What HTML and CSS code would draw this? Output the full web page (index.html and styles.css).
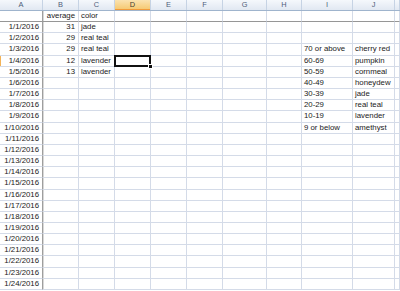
FILE: index.html
```html
<!DOCTYPE html>
<html>
<head>
<meta charset="utf-8">
<link rel="stylesheet" href="styles.css">
</head>
<body>
<div class="sheet">
  <div class="hdr"><span>A</span><span>B</span><span>C</span><span class="sel">D</span><span>E</span><span>F</span><span>G</span><span>H</span><span>I</span><span>J</span><span></span></div>
  <div class="r r1"><span></span><span class="n">average</span><span>color</span><span></span><span></span><span></span><span></span><span></span><span></span><span></span><span></span></div>
  <div class="r"><span class="n">1/1/2016</span><span class="n">31</span><span>jade</span><span></span><span></span><span></span><span></span><span></span><span></span><span></span><span></span></div>
  <div class="r"><span class="n">1/2/2016</span><span class="n">29</span><span>real teal</span><span></span><span></span><span></span><span></span><span></span><span></span><span></span><span></span></div>
  <div class="r"><span class="n">1/3/2016</span><span class="n">29</span><span>real teal</span><span></span><span></span><span></span><span></span><span></span><span>70 or above</span><span>cherry red</span><span></span></div>
  <div class="r r5"><span class="n">1/4/2016</span><span class="n">12</span><span>lavender</span><span class="cur"></span><span></span><span></span><span></span><span></span><span>60-69</span><span>pumpkin</span><span></span></div>
  <div class="r"><span class="n">1/5/2016</span><span class="n">13</span><span>lavender</span><span></span><span></span><span></span><span></span><span></span><span>50-59</span><span>cornmeal</span><span></span></div>
  <div class="r"><span class="n">1/6/2016</span><span></span><span></span><span></span><span></span><span></span><span></span><span></span><span>40-49</span><span>honeydew</span><span></span></div>
  <div class="r"><span class="n">1/7/2016</span><span></span><span></span><span></span><span></span><span></span><span></span><span></span><span>30-39</span><span>jade</span><span></span></div>
  <div class="r"><span class="n">1/8/2016</span><span></span><span></span><span></span><span></span><span></span><span></span><span></span><span>20-29</span><span>real teal</span><span></span></div>
  <div class="r"><span class="n">1/9/2016</span><span></span><span></span><span></span><span></span><span></span><span></span><span></span><span>10-19</span><span>lavender</span><span></span></div>
  <div class="r"><span class="n">1/10/2016</span><span></span><span></span><span></span><span></span><span></span><span></span><span></span><span>9 or below</span><span>amethyst</span><span></span></div>
  <div class="r"><span class="n">1/11/2016</span><span></span><span></span><span></span><span></span><span></span><span></span><span></span><span></span><span></span><span></span></div>
  <div class="r"><span class="n">1/12/2016</span><span></span><span></span><span></span><span></span><span></span><span></span><span></span><span></span><span></span><span></span></div>
  <div class="r"><span class="n">1/13/2016</span><span></span><span></span><span></span><span></span><span></span><span></span><span></span><span></span><span></span><span></span></div>
  <div class="r"><span class="n">1/14/2016</span><span></span><span></span><span></span><span></span><span></span><span></span><span></span><span></span><span></span><span></span></div>
  <div class="r"><span class="n">1/15/2016</span><span></span><span></span><span></span><span></span><span></span><span></span><span></span><span></span><span></span><span></span></div>
  <div class="r"><span class="n">1/16/2016</span><span></span><span></span><span></span><span></span><span></span><span></span><span></span><span></span><span></span><span></span></div>
  <div class="r"><span class="n">1/17/2016</span><span></span><span></span><span></span><span></span><span></span><span></span><span></span><span></span><span></span><span></span></div>
  <div class="r"><span class="n">1/18/2016</span><span></span><span></span><span></span><span></span><span></span><span></span><span></span><span></span><span></span><span></span></div>
  <div class="r"><span class="n">1/19/2016</span><span></span><span></span><span></span><span></span><span></span><span></span><span></span><span></span><span></span><span></span></div>
  <div class="r"><span class="n">1/20/2016</span><span></span><span></span><span></span><span></span><span></span><span></span><span></span><span></span><span></span><span></span></div>
  <div class="r"><span class="n">1/21/2016</span><span></span><span></span><span></span><span></span><span></span><span></span><span></span><span></span><span></span><span></span></div>
  <div class="r"><span class="n">1/22/2016</span><span></span><span></span><span></span><span></span><span></span><span></span><span></span><span></span><span></span><span></span></div>
  <div class="r"><span class="n">1/23/2016</span><span></span><span></span><span></span><span></span><span></span><span></span><span></span><span></span><span></span><span></span></div>
  <div class="r"><span class="n">1/24/2016</span><span></span><span></span><span></span><span></span><span></span><span></span><span></span><span></span><span></span><span></span></div>
</div>
</body>
</html>
```

FILE: styles.css
```css
html, body {
  margin: 0;
  padding: 0;
  background: #fff;
}
body {
  width: 400px;
  height: 291px;
  overflow: hidden;
  font-family: "Liberation Sans", Arial, sans-serif;
  font-size: 7.8px;
  color: #1a1a1a;
}
.sheet {
  display: flex;
  flex-direction: column;
}
.hdr, .r {
  display: grid;
  grid-template-columns: 43px 36px 36px 36px 36px 36px 44px 35px 51px 42px 1fr;
}
.hdr {
  height: 11px;
  box-sizing: border-box;
  background: linear-gradient(#f5f8fc, #e1e8f2);
  border-bottom: 1px solid #9fb4cd;
}
.hdr span {
  border-right: 1px solid #c6d3e4;
  text-align: center;
  color: #4e6079;
  font-size: 7.4px;
  line-height: 10px;
}
.hdr .sel {
  background: linear-gradient(#fbe3b0, #f5c76d);
  color: #3f3a2e;
  box-shadow: inset 0 -1px 0 #f29b3a;
}
.r {
  height: 11.17px;
}
.r span {
  box-sizing: border-box;
  border-right: 1px solid #d4dbe8;
  border-bottom: 1px solid #d4dbe8;
  line-height: 10px;
  padding: 0 2px;
  white-space: nowrap;
  overflow: hidden;
}
.r span:first-child {
  border-right: 1px solid #9e9e9e;
  box-shadow: 1px 0 0 #d8d8d8;
}
.r1 span {
  border-bottom-color: #969696;
}
.n {
  text-align: right;
}
.r span.n {
  padding-right: 3px;
}
.r5 span:first-child {
  box-shadow: inset 1px 0 0 #f3b358, 1px 0 0 #d8d8d8;
}
.r span.cur {
  position: relative;
  overflow: visible;
}
.cur::after {
  content: "";
  position: absolute;
  left: -1px;
  top: -1px;
  right: -1px;
  bottom: -1px;
  border: 2px solid #111;
}
.cur::before {
  content: "";
  position: absolute;
  right: -3px;
  bottom: -3px;
  width: 3px;
  height: 3px;
  background: #111;
  border: 1px solid #fff;
  z-index: 2;
}
```
